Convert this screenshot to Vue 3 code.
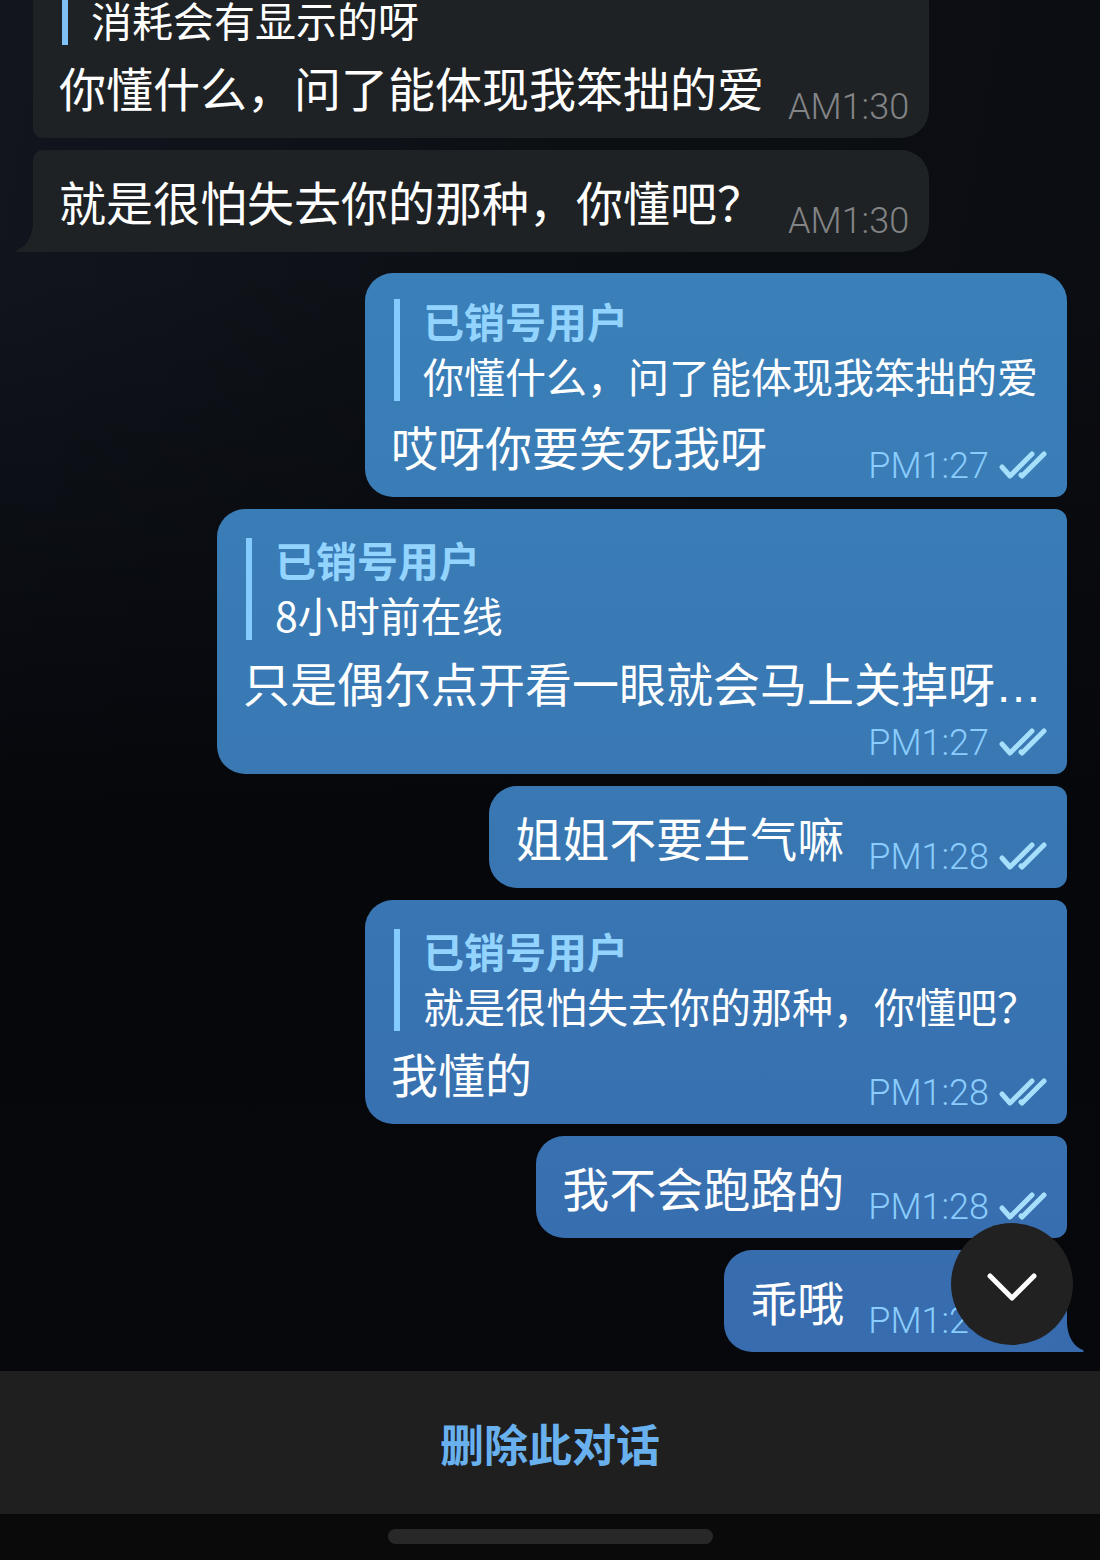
<template>
    <div class="page">
        <main class="chat">
            <!--对方的消息-->
            <section class="group in">
                <article v-for="(msg, i) in received" :key="i" class="bubble">
                    <blockquote v-if="msg.quote" class="quote">
                        <p class="quote-text">{{ msg.quote }}</p>
                    </blockquote>
                    <div class="body">
                        <p class="text">{{ msg.text }}</p>
                        <div class="meta">
                            <time>{{ msg.time }}</time>
                        </div>
                    </div>
                    <svg v-if="i === received.length - 1" class="tail" viewBox="0 0 30 36">
                        <path d="M17 0V8C16 21 10 31 1 34Q-1 36 2 36H30V0Z" />
                    </svg>
                </article>
            </section>
            <!--自己的消息-->
            <section class="group out">
                <article v-for="(msg, i) in sent" :key="i" class="bubble">
                    <blockquote v-if="msg.quote" class="quote">
                        <strong class="quote-name">{{ quoteName }}</strong>
                        <p class="quote-text">{{ msg.quote }}</p>
                    </blockquote>
                    <div class="body" :class="{ stacked: msg.stacked }">
                        <p class="text">{{ msg.text }}<span v-if="msg.more" class="dots">…</span></p>
                        <div class="meta">
                            <time>{{ msg.time }}</time>
                            <svg class="ticks" viewBox="0 0 48 32">
                                <path d="M3 19L11 28L33 6M22 27L23 28L45 6" />
                            </svg>
                        </div>
                    </div>
                    <svg v-if="i === sent.length - 1" class="tail" viewBox="0 0 30 36">
                        <path d="M13 0V8C14 21 20 31 29 34Q31 36 28 36H0V0Z" />
                    </svg>
                </article>
            </section>
            <button class="to-bottom" type="button" aria-label="回到底部">
                <svg viewBox="0 0 52 36">
                    <path d="M4 10L26 32L48 10" />
                </svg>
            </button>
        </main>
        <footer>
            <button class="delete" type="button">删除此对话</button>
            <div class="nav">
                <span class="pill"></span>
            </div>
        </footer>
    </div>
</template>
<script setup>
import { ref } from "vue";
//被引用人的名字
const quoteName = "已销号用户";
const received = ref([
    { quote: "消耗会有显示的呀", text: "你懂什么，问了能体现我笨拙的爱", time: "AM1:30" },
    { text: "就是很怕失去你的那种，你懂吧？", time: "AM1:30" },
]);
const sent = ref([
    { quote: "你懂什么，问了能体现我笨拙的爱", text: "哎呀你要笑死我呀", time: "PM1:27" },
    //文字占满一行时，时间换到下一行
    { quote: "8小时前在线", text: "只是偶尔点开看一眼就会马上关掉呀", more: true, time: "PM1:27", stacked: true },
    { text: "姐姐不要生气嘛", time: "PM1:28" },
    { quote: "就是很怕失去你的那种，你懂吧？", text: "我懂的", time: "PM1:28" },
    { text: "我不会跑路的", time: "PM1:28" },
    { text: "乖哦", time: "PM1:28" },
]);
</script>
<style>
body {
    background: #0a0a0a;
}
</style>
<style scoped>
.page {
    height: 100vh;
    display: flex;
    flex-direction: column;
    font-family: "Noto Sans CJK SC", sans-serif;
    color: #fff;
}
p {
    margin: 0;
}

/*聊天区域，内容贴底，超出部分从顶部裁掉*/
.chat {
    position: relative;
    flex: 1;
    min-height: 0;
    display: flex;
    flex-direction: column;
    justify-content: flex-end;
    gap: 21px;
    padding: 0 33px 19px;
    overflow: hidden;
    background: linear-gradient(180deg, transparent 20%, #05070b 60%, #06080c 100%),
        linear-gradient(100deg, #12151e 0%, #0b0e12 50%, #0b0d12 100%);
}
.group {
    display: flex;
    flex-direction: column;
    gap: 12px;
}
.in {
    align-items: flex-start;
}
.out {
    align-items: flex-end;
}

.bubble {
    position: relative;
    padding: 21px 20px 14px 26px;
}
.in .bubble {
    background: #1f2224;
    border-radius: 10px 28px 28px 10px;
}
.out .bubble {
    background: linear-gradient(180deg, #3a80b9 15%, #3978b3 50%, #376bae 88%) fixed;
    border-radius: 28px 12px 12px 28px;
}
.out .bubble:first-child {
    border-top-right-radius: 28px;
}
.tail {
    position: absolute;
    bottom: 0;
    width: 30px;
    height: 36px;
}
.in .bubble:last-child {
    border-bottom-left-radius: 0;
}
.in .tail {
    left: -17px;
    fill: #1f2224;
}
.out .bubble:last-child {
    border-bottom-right-radius: 0;
}
.out .tail {
    right: -17px;
    fill: #376bae;
}

/*引用*/
.quote {
    display: flex;
    flex-direction: column;
    gap: 8px;
    margin: 8px 9px 12px 3px;
    padding-left: 23px;
    border-left: 6px solid #84cbff;
    font-size: 41px;
}
.in .quote {
    border-color: #7fc0f5;
}
.out .bubble:first-child .quote {
    margin-top: 5px;
    margin-bottom: 15px;
}
.quote-name {
    line-height: 42px;
    color: #93d4ff;
}
.quote-text {
    line-height: 52px;
    white-space: nowrap;
}

.body {
    display: flex;
    justify-content: space-between;
    align-items: flex-end;
    gap: 24px;
}
.text {
    margin-bottom: 7px;
    font-size: 47px;
    line-height: 60px;
    white-space: nowrap;
}
/*省略号贴着基线*/
.dots {
    font-family: "Liberation Sans", sans-serif;
    line-height: 1;
}
.stacked {
    flex-direction: column;
    gap: 6px;
}
.stacked .text {
    margin-right: 5px;
}
.meta {
    display: flex;
    align-items: flex-end;
    gap: 10px;
    font-family: Roboto, sans-serif;
    font-size: 36px;
    font-weight: 350;
    line-height: 34px;
    color: #828486;
}
.out .meta {
    color: #8accfd;
}
.ticks {
    width: 48px;
    height: 32px;
    margin-bottom: 3px;
    fill: none;
    stroke: #a6dffb;
    stroke-width: 5;
    stroke-linecap: round;
    stroke-linejoin: round;
}

.to-bottom {
    position: absolute;
    right: 27px;
    bottom: 26px;
    width: 122px;
    height: 122px;
    display: flex;
    align-items: center;
    justify-content: center;
    padding: 0;
    border: none;
    border-radius: 50%;
    background: #212121;
}
.to-bottom svg {
    width: 52px;
    height: 36px;
    fill: none;
    stroke: #fff;
    stroke-width: 5;
    stroke-linecap: round;
    stroke-linejoin: round;
}

.delete {
    display: block;
    width: 100%;
    padding: 40px 0 39px;
    border: none;
    background: #1f1f1f;
    color: #69b0ee;
    font-family: inherit;
    font-size: 44px;
    font-weight: 700;
    line-height: 64px;
}
.nav {
    display: flex;
    justify-content: center;
    padding: 15px 0 16px;
    background: #0a0a0a;
}
.pill {
    width: 325px;
    height: 15px;
    border-radius: 8px;
    background: #282828;
}
</style>
